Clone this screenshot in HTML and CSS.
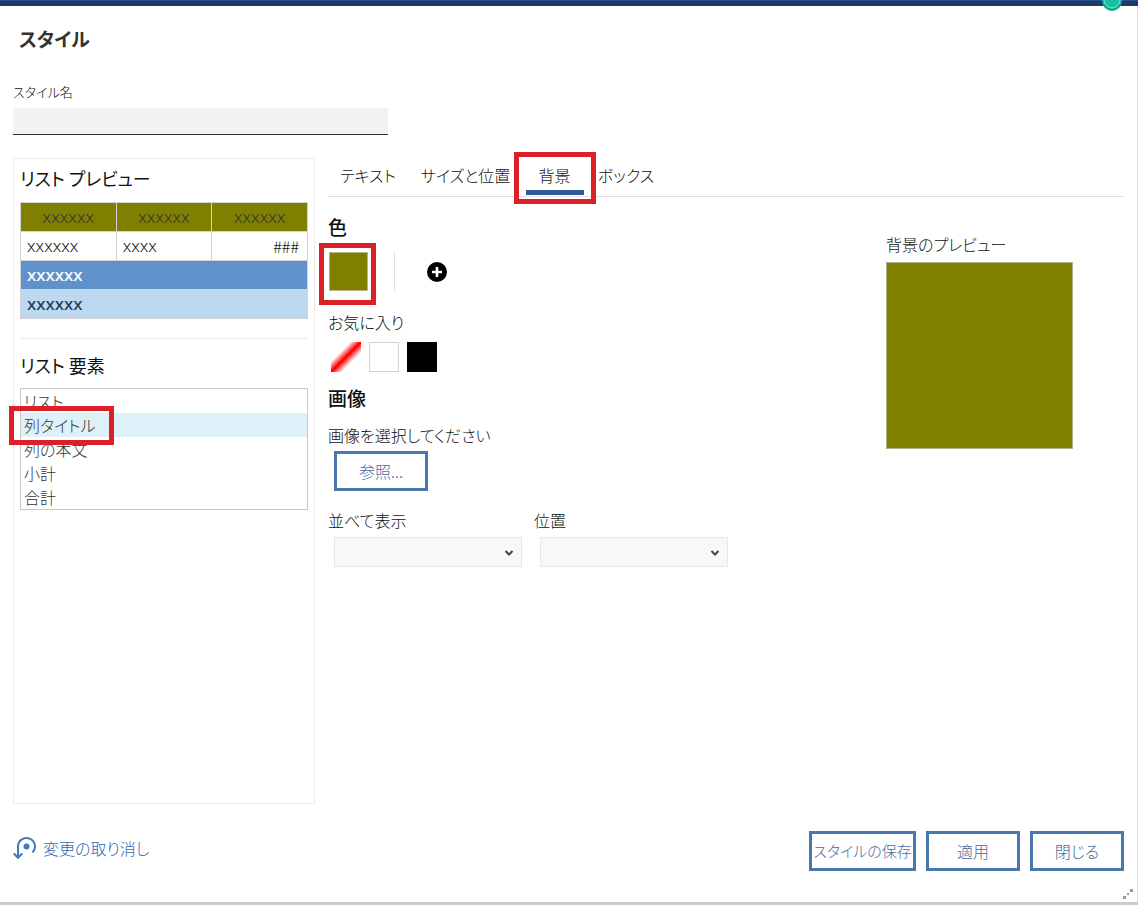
FILE: index.html
```html
<!DOCTYPE html>
<html lang="ja">
<head>
<meta charset="utf-8">
<meta name="viewport" content="width=device-width, initial-scale=1">
<title>スタイル</title>
<link rel="stylesheet" href="styles.css">
</head>
<body>
<div class="app-bar">
  <svg class="avatar" viewBox="0 0 20 20" aria-hidden="true"><circle cx="10" cy="10" r="10" fill="#12a58c"/><circle cx="10" cy="9" r="8" fill="#1bbfa2" stroke="#7ce0cf"/></svg>
</div>
<main class="dialog">
  <h1 class="title">スタイル</h1>
  <div class="name-field">
    <label class="name-label" for="style-name">スタイル名</label>
    <input class="name-input" id="style-name" type="text">
  </div>
  <div class="workspace">
    <section class="side">
      <h2 class="heading">リスト プレビュー</h2>
      <table class="preview-table">
        <thead><tr><th>xxxxxx</th><th>xxxxxx</th><th>xxxxxx</th></tr></thead>
        <tbody>
          <tr><td>xxxxxx</td><td>xxxx</td><td class="number">###</td></tr>
          <tr class="subtotal"><td colspan="3">xxxxxx</td></tr>
          <tr class="total"><td colspan="3">xxxxxx</td></tr>
        </tbody>
      </table>
      <hr class="rule">
      <h2 class="heading"><label for="elements">リスト 要素</label></h2>
      <div class="elements-wrap">
        <select class="elements" id="elements" size="5">
          <option>リスト</option>
          <option selected>列タイトル</option>
          <option>列の本文</option>
          <option>小計</option>
          <option>合計</option>
        </select>
        <span class="mark mark-element"></span>
      </div>
    </section>
    <section class="editor">
      <div class="tabs" role="tablist">
        <button class="tab" type="button" role="tab">テキスト</button>
        <button class="tab" type="button" role="tab">サイズと位置</button>
        <button class="tab tab-active" type="button" role="tab" aria-selected="true">背景<span class="mark mark-tab"></span></button>
        <button class="tab" type="button" role="tab">ボックス</button>
      </div>
      <div class="panel">
        <div class="options">
          <h3 class="heading heading-strong">色</h3>
          <div class="color-row">
            <button class="swatch-current" type="button" aria-label="現在の色"><span class="mark mark-color"></span></button>
            <span class="divider"></span>
            <button class="add" type="button" aria-label="色の追加">
              <svg class="add-icon" viewBox="0 0 20 20"><circle cx="10" cy="10" r="10"/><path d="M10 5v10M5 10h10" stroke="#fff" stroke-width="2.6"/></svg>
            </button>
          </div>
          <p class="label">お気に入り</p>
          <div class="favorites">
            <button class="swatch swatch-none" type="button" aria-label="なし"></button>
            <button class="swatch swatch-white" type="button" aria-label="白"></button>
            <button class="swatch swatch-black" type="button" aria-label="黒"></button>
          </div>
          <h3 class="heading heading-strong">画像</h3>
          <p class="label image-label">画像を選択してください</p>
          <button class="button browse" type="button">参照...</button>
          <div class="fields">
            <div class="field">
              <label class="label" for="tiling">並べて表示</label>
              <div class="select-box"><select class="select" id="tiling"></select><svg class="chevron" viewBox="0 0 10 8"><path d="M1.5 2 5 5.5 8.500 2"/></svg></div>
            </div>
            <div class="field">
              <label class="label" for="position">位置</label>
              <div class="select-box"><select class="select" id="position"></select><svg class="chevron" viewBox="0 0 10 8"><path d="M1.5 2 5 5.5 8.500 2"/></svg></div>
            </div>
          </div>
        </div>
        <figure class="preview">
          <figcaption class="label">背景のプレビュー</figcaption>
          <div class="preview-box"></div>
        </figure>
      </div>
    </section>
  </div>
  <footer class="footer">
    <button class="undo" type="button">
      <svg class="undo-icon" viewBox="0 0 24 24" fill="none" stroke="#4178be" stroke-width="2"><path d="M5 21V10.500a8.500 8.500 0 1 1 14.500 6"/><path d="M.8 17.500 5 21.800 9.200 17.500" stroke-width="2.200"/><circle cx="13.500" cy="10.500" r="3" fill="#4178be" stroke="none"/></svg>
      変更の取り消し
    </button>
    <div class="actions">
      <button class="button save" type="button">スタイルの保存</button>
      <button class="button" type="button">適用</button>
      <button class="button" type="button">閉じる</button>
    </div>
  </footer>
  <svg class="grip" viewBox="0 0 10 10" fill="#999" aria-hidden="true"><path d="M0 7h3v3H0zM4 4h2v2H4zM7 0h3v3H7z"/></svg>
</main>
</body>
</html>
```
FILE: styles.css
```css
* { box-sizing: border-box; }
body {
  margin: 0;
  min-height: 100vh;
  display: flex;
  flex-direction: column;
  background: #cbcbcb;
  color: #111;
  font-family: "Noto Sans CJK JP", sans-serif;
  font-size: 16px;
  font-weight: 300;
  line-height: 24px;
  font-feature-settings: "palt";
}
button, input, select { font: inherit; color: inherit; font-feature-settings: inherit; border-radius: 0; }
button { cursor: pointer; }
h1, h2, h3, p, figure { margin: 0; }
.app-bar {
  position: relative;
  z-index: 1;
  height: 6px;
  background: linear-gradient(#29538c 0 1px, #1c3763 1px);
}
.avatar { position: absolute; right: 16px; bottom: -5px; width: 20px; height: 20px; }
.dialog {
  position: relative;
  flex: 1;
  display: flex;
  flex-direction: column;
  margin-bottom: 3px;
  padding: 20px 13px 31px;
  background: #fff;
  border-right: 1px solid #ddd;
}
.title { padding-left: 6px; font-size: 19px; font-weight: 700; line-height: 26px; color: #333; }
.name-field { display: flex; flex-direction: column; margin-top: 30px; }
.name-label { font-size: 13px; line-height: 20px; }
.name-input {
  width: 375px;
  height: 27px;
  margin-top: 6px;
  border: 0;
  border-bottom: 1px solid #333;
  background: #f2f2f2;
}
.workspace { flex: 1; display: flex; gap: 13px; margin-top: 23px; }
.side { width: 302px; padding: 6px; border: 1px solid #ebebeb; }
.heading { font-size: 18px; font-weight: 400; line-height: 26px; }
.heading-strong { font-size: 19px; font-weight: 500; }
.preview-table {
  width: 100%;
  margin-top: 11px;
  border-collapse: collapse;
  table-layout: fixed;
  font-family: "Noto Sans", sans-serif;
  font-size: 17px;
  line-height: 28px;
}
.preview-table th, .preview-table td { padding: 0 6px; border: 1px solid #d3d3d3; text-align: left; }
.preview-table th { background: #808000; text-align: center; font-weight: 300; color: #333; }
.preview-table .number { padding-right: 8px; font-family: "Noto Sans CJK JP", sans-serif; font-size: 16px; text-align: right; line-height: 26px; }
.preview-table .subtotal td { background: #6091ca; color: #fff; font-weight: 500; }
.preview-table .total td { background: #bcd9f0; color: #23405f; font-weight: 500; }
.rule { margin: 19px 0 13px; border: 0; border-top: 1px solid #ebebeb; }
.elements-wrap { position: relative; margin-top: 10px; }
.elements {
  display: block;
  width: 100%;
  height: 122px;
  padding: 0;
  border: 1px solid #c8c8c8;
  background: #fff;
  color: #333;
  overflow: hidden;
  outline: 0;
}
.elements option { height: 24px; min-height: 24px; padding: 0 3px; font-weight: 300; line-height: 24px; }
.elements option:checked { background: linear-gradient(#dff1f8, #dff1f8); color: #333; }
.mark { position: absolute; border: 5px solid #db2128; pointer-events: none; }
.mark-element { left: -11px; top: 18px; width: 105px; height: 39px; }
.mark-tab { inset: -6px -10px -8px -9px; }
.mark-color { inset: -10px -9px -15px -11px; }
.editor { flex: 1; min-width: 0; }
.tabs {
  display: grid;
  grid-template-columns: 80px 115px 63px 80px;
  height: 39px;
  border-bottom: 1px solid #e0e0e0;
}
.tab { position: relative; padding: 0 0 4px; border: 0; background: none; white-space: nowrap; }
.tab-active::after { content: ""; position: absolute; left: 3px; right: 2px; bottom: 1px; height: 5px; background: #325a96; }
.panel { display: flex; justify-content: space-between; padding: 17px 51px 0 0; }
.color-row { display: flex; align-items: center; margin-top: 12px; padding-left: 1px; }
.swatch-current { position: relative; width: 39px; height: 39px; padding: 0; border: 1px solid #b5b58a; background: #808000; }
.divider { width: 1px; height: 39px; margin: 0 32px 0 26px; background: #e0e0e0; }
.add { display: flex; padding: 0; border: 0; background: none; }
.add-icon { width: 20px; height: 20px; }
.label { display: block; line-height: 24px; }
.color-row + .label { margin-top: 19px; }
.favorites { display: flex; gap: 8px; margin: 8px 0 13px 3px; }
.swatch { width: 30px; height: 30px; padding: 0; border: 0; }
.swatch-none { background: linear-gradient(135deg, #fff 32%, #f00 49%, #f00 51%, #fff 68%); }
.swatch-white { background: #fff; border: 1px solid #d3d3d3; }
.swatch-black { background: #000; }
.image-label { margin-top: 12px; }
.button {
  width: 94px;
  height: 40px;
  padding: 0;
  border: 3px solid #4a78ab;
  background: #fff;
  color: #3f6c9f;
  white-space: nowrap;
}
.browse { margin: 4px 0 0 6px; }
.fields { display: flex; gap: 18px; margin-top: 17px; }
.field { width: 188px; }
.select-box { position: relative; margin: 5px -6px 0 6px; }
.select { display: block; width: 100%; height: 30px; border: 1px solid #e6e6e6; background: #f8f8f8; appearance: none; }
.chevron { position: absolute; right: 8px; top: 12px; width: 10px; height: 8px; fill: none; stroke: #444; stroke-width: 2; pointer-events: none; }
.preview { padding-top: 18px; }
.preview-box { width: 187px; height: 187px; margin-top: 6px; background: #808000; border: 1px solid #b0b090; }
.footer { display: flex; align-items: center; justify-content: space-between; margin-top: 27px; }
.undo { display: flex; align-items: center; gap: 6px; padding: 0 0 6px; border: 0; background: none; color: #2f68b0; }
.undo-icon { width: 24px; height: 24px; }
.actions { display: flex; gap: 10px; }
.save { width: 107px; font-size: 15px; }
.grip { position: absolute; right: 4px; bottom: 3px; width: 10px; height: 10px; }
```
